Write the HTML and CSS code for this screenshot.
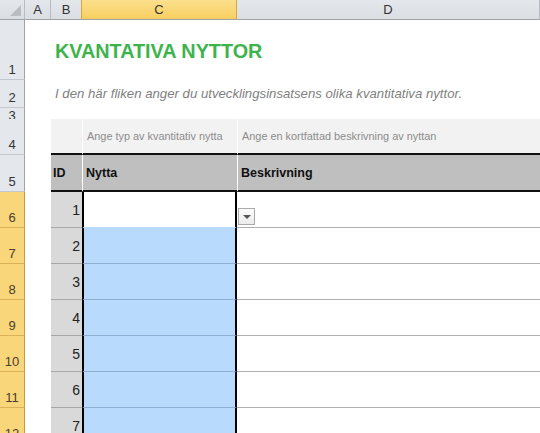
FILE: index.html
```html
<!DOCTYPE html>
<html>
<head>
    <title>Kvantativa nyttor</title>
    <meta charset="UTF-8">
    <link rel="stylesheet" href="styles.css">
</head>
<body>
    <div class="sheet">
        <div class="row colhead">
            <div class="corner"><span class="tri"></span></div>
            <div class="ch">A</div>
            <div class="ch">B</div>
            <div class="ch sel">C</div>
            <div class="ch">D</div>
        </div>
        <div class="row r1">
            <div class="rh">1</div>
            <div class="cell"></div>
            <div class="cell title">KVANTATIVA NYTTOR</div>
            <div class="cell"></div>
            <div class="cell"></div>
        </div>
        <div class="row r2">
            <div class="rh">2</div>
            <div class="cell"></div>
            <div class="cell intro">I den här fliken anger du utvecklingsinsatsens olika kvantitativa nyttor.</div>
            <div class="cell"></div>
            <div class="cell"></div>
        </div>
        <div class="row r3">
            <div class="rh">3</div>
            <div class="cell"></div>
            <div class="cell"></div>
            <div class="cell"></div>
            <div class="cell"></div>
        </div>
        <div class="row r4">
            <div class="rh">4</div>
            <div class="cell"></div>
            <div class="cell hint"></div>
            <div class="cell hint sep">Ange typ av kvantitativ nytta</div>
            <div class="cell hint sep">Ange en kortfattad beskrivning av nyttan</div>
        </div>
        <div class="row r5">
            <div class="rh">5</div>
            <div class="cell"></div>
            <div class="cell th">ID</div>
            <div class="cell th sep">Nytta</div>
            <div class="cell th sep">Beskrivning</div>
        </div>
        <div class="row data first">
            <div class="rh on">6</div>
            <div class="cell"></div>
            <div class="cell id">1</div>
            <div class="cell nytta active"></div>
            <div class="cell desc"><span class="dropdown"><span class="arrow"></span></span></div>
        </div>
        <div class="row data">
            <div class="rh on">7</div>
            <div class="cell"></div>
            <div class="cell id">2</div>
            <div class="cell nytta"></div>
            <div class="cell desc"></div>
        </div>
        <div class="row data">
            <div class="rh on">8</div>
            <div class="cell"></div>
            <div class="cell id">3</div>
            <div class="cell nytta"></div>
            <div class="cell desc"></div>
        </div>
        <div class="row data">
            <div class="rh on">9</div>
            <div class="cell"></div>
            <div class="cell id">4</div>
            <div class="cell nytta"></div>
            <div class="cell desc"></div>
        </div>
        <div class="row data">
            <div class="rh on">10</div>
            <div class="cell"></div>
            <div class="cell id">5</div>
            <div class="cell nytta"></div>
            <div class="cell desc"></div>
        </div>
        <div class="row data">
            <div class="rh on">11</div>
            <div class="cell"></div>
            <div class="cell id">6</div>
            <div class="cell nytta"></div>
            <div class="cell desc"></div>
        </div>
        <div class="row data">
            <div class="rh on">12</div>
            <div class="cell"></div>
            <div class="cell id">7</div>
            <div class="cell nytta"></div>
            <div class="cell desc"></div>
        </div>
    </div>
</body>
</html>
```

FILE: styles.css
```css
* {
    box-sizing: border-box;
}
body {
    margin: 0;
    font-family: "Liberation Sans", Arial, sans-serif;
    background-color: #fff;
    overflow: hidden;
}
.sheet {
    width: 540px;
}
.row {
    display: grid;
    grid-template-columns: 25px 26px 31px 155px 303px;
}
/* Kolumnrubriker */
.colhead {
    height: 20px;
    background: linear-gradient(#e4e7eb, #dadde2);
    border-bottom: 1px solid #9fa3a8;
}
.corner {
    position: relative;
    border-right: 1px solid #b8bcc2;
}
.corner .tri {
    position: absolute;
    right: 3px;
    bottom: 3px;
    width: 0;
    height: 0;
    border-left: 11px solid transparent;
    border-bottom: 11px solid #b9bdc2;
}
.ch {
    display: flex;
    align-items: center;
    justify-content: center;
    font-size: 13px;
    color: #333;
    border-right: 1px solid #b8bcc2;
}
.ch.sel {
    background: linear-gradient(#fce08c, #f7cf60);
    border-right: 1px solid #d5a93e;
    border-left: 1px solid #d5a93e;
    margin-left: -1px;
}
/* Radrubriker */
.rh {
    display: flex;
    align-items: flex-end;
    justify-content: center;
    padding-bottom: 2px;
    font-size: 13px;
    color: #333;
    background-color: #e4e7ec;
    border-right: 1px solid #9fa3a8;
    border-bottom: 1px solid #c3c8cf;
}
.rh.on {
    background-color: #f9d67a;
    border-bottom: 1px solid #dbb15a;
    border-right: 1px solid #c99a3a;
    color: #4a4030;
}
.cell {
    white-space: nowrap;
    overflow: visible;
}
.r1 { height: 60px; }
.r2 { height: 28px; }
.r3 { height: 11px; }
.r4 { height: 36px; }
.r5 { height: 37px; }
.data { height: 36px; }
.data.first { height: 36px; }
.title {
    padding: 20px 0 0 4px;
    font-size: 19.8px;
    font-weight: bold;
    color: #3db44b;
}
.intro {
    padding: 6px 0 0 4px;
    font-size: 13.2px;
    font-style: italic;
    color: #7f7f7f;
}
.hint {
    display: flex;
    align-items: center;
    padding-left: 4px;
    font-size: 10.9px;
    color: #8c8c8c;
    background-color: #f2f2f2;
    border-bottom: 2px solid #111;
}
.sep {
    border-left: 1px solid #fff;
}
.th {
    display: flex;
    align-items: center;
    padding-left: 2px;
    font-size: 12.5px;
    font-weight: bold;
    color: #111;
    background-color: #bfbfbf;
    border-bottom: 2px solid #111;
}
.th.sep {
    padding-left: 3px;
}
.id {
    display: flex;
    align-items: center;
    justify-content: flex-end;
    padding-right: 2px;
    font-size: 14px;
    color: #222;
    background-color: #d9d9d9;
    border-bottom: 1px solid #a8a8a8;
}
.nytta {
    background-color: #b8dbfd;
    border-left: 2px solid #000;
    border-right: 2px solid #000;
    border-bottom: 1px solid #8eaed0;
}
.nytta.active {
    background-color: #fff;
    border-bottom: 1px solid #b8dbfd;
}
.desc {
    position: relative;
    border-bottom: 1px solid #b0b0b0;
}
.dropdown {
    position: absolute;
    left: 1px;
    top: 16px;
    width: 17px;
    height: 17px;
    background: linear-gradient(#fbfbfb, #ececec);
    border: 1px solid #aaa;
}
.dropdown .arrow {
    position: absolute;
    left: 4px;
    top: 6px;
    width: 0;
    height: 0;
    border-left: 4px solid transparent;
    border-right: 4px solid transparent;
    border-top: 4px solid #555;
}
```
